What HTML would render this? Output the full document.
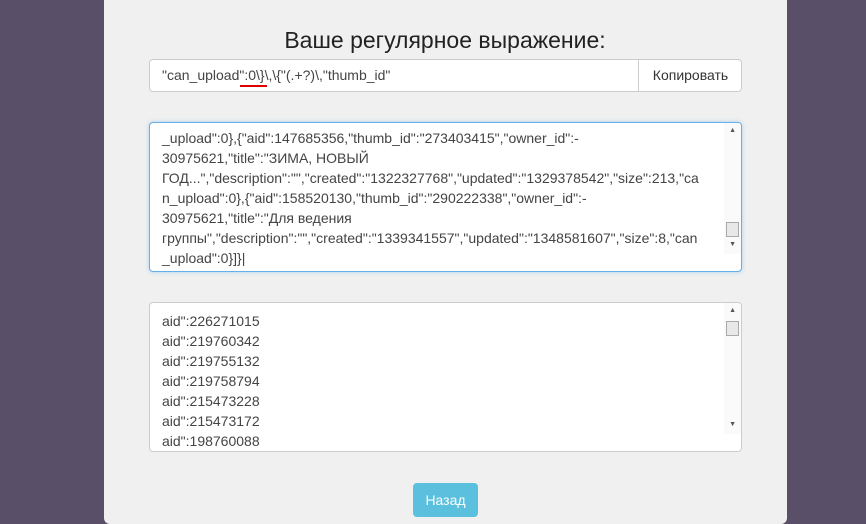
<!DOCTYPE html>
<html><head><meta charset="utf-8"><style>
body{margin:0;width:866px;height:513px;overflow:hidden;background:#594f68;font-family:"Liberation Sans","Noto Sans CJK SC",sans-serif;}
.panel{position:absolute;left:104px;top:-6px;width:683px;height:530px;background:#f0f0f0;border-radius:6px;}
h1{position:absolute;left:12px;width:866px;top:27px;margin:0;text-align:center;font-weight:normal;font-size:23px;color:#222;}
.ig{position:absolute;left:149px;top:59px;width:591px;height:31px;border:1px solid #ccc;border-radius:4px;background:#fff;}
.ig .t{position:absolute;left:12px;top:7px;font-size:14px;color:#444;}
.ig .u{position:absolute;left:90px;top:25px;width:27px;height:2px;background:#d00;}
.ig .b{position:absolute;left:488px;top:0;width:103px;height:31px;border-left:1px solid #ccc;font-size:14px;color:#333;text-align:center;line-height:31px;}
.ta{position:absolute;left:149px;width:591px;height:148px;background:#fff;border:1px solid #ccc;border-radius:4px;overflow:hidden;}
.ta pre{margin:0;position:absolute;left:12px;font-family:"Liberation Sans",sans-serif;font-size:14px;line-height:20px;color:#444;}
.sb{position:absolute;right:0;top:0;width:17px;height:131px;background:#fafafa;}
.th{position:absolute;right:2px;width:13px;height:15px;background:#e8e8e8;border:1px solid #aaa;box-sizing:border-box;}
.ar{position:absolute;right:5px;font-size:7px;color:#555;}
.btn{position:absolute;left:413px;top:483px;width:65px;height:34px;background:#5bc0de;border-radius:4px;color:#fff;font-size:14px;text-align:center;line-height:34px;}
</style></head><body>
<div class="panel"></div>
<h1>Ваше регулярное выражение:</h1>
<div class="ig"><span class="t">"can_upload":0\}\,\{"(.+?)\,"thumb_id"</span><div class="u"></div><div class="b">Копировать</div></div>
<div class="ta" style="top:122px;border-color:#66afe9;box-shadow:0 0 4px rgba(102,175,233,.5)">
<pre style="top:5px">_upload":0},{"aid":147685356,"thumb_id":"273403415","owner_id":-
30975621,"title":"ЗИМА, НОВЫЙ
ГОД...","description":"","created":"1322327768","updated":"1329378542","size":213,"ca
n_upload":0},{"aid":158520130,"thumb_id":"290222338","owner_id":-
30975621,"title":"Для ведения
группы","description":"","created":"1339341557","updated":"1348581607","size":8,"can
_upload":0}]}|</pre>
<div class="sb"><span class="ar" style="top:4px">▲</span><div class="th" style="top:99px"></div><span class="ar" style="top:118px">▼</span></div>
</div>
<div class="ta" style="top:302px">
<pre style="top:8px">aid":226271015
aid":219760342
aid":219755132
aid":219758794
aid":215473228
aid":215473172
aid":198760088</pre>
<div class="sb"><span class="ar" style="top:4px">▲</span><div class="th" style="top:18px"></div><span class="ar" style="top:118px">▼</span></div>
</div>
<div class="btn">Назад</div>
</body></html>
